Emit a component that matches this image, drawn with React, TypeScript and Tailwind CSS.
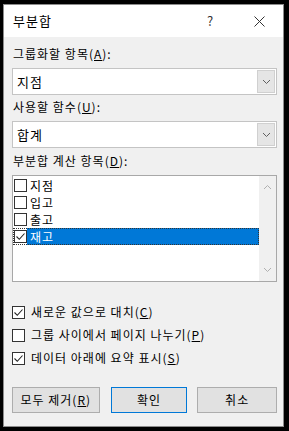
import React from "react";

const font = { fontFamily: '"Noto Sans CJK KR", "Noto Sans", sans-serif' };

function Chevron({ up = false, color = "#606060" }: { up?: boolean; color?: string }) {
  return (
    <svg width="9" height="6" viewBox="0 0 9 6">
      <path d={up ? "M1 5 L4.5 1.5 L8 5" : "M1 1 L4.5 4.5 L8 1"} fill="none" stroke={color} strokeWidth="1" />
    </svg>
  );
}

function Box({ checked }: { checked: boolean }) {
  return (
    <div className="w-[13px] h-[13px] border border-[#333333] bg-white flex items-center justify-center shrink-0">
      {checked && (
        <svg width="11" height="11" viewBox="0 0 11 11">
          <path d="M1.5 5.5 L4.3 8.3 L9.5 2.5" fill="none" stroke="#222" strokeWidth="1.1" />
        </svg>
      )}
    </div>
  );
}

function Combo({ value }: { value: string }) {
  return (
    <div className="h-[27px] border border-[#c4c4c4] bg-white flex items-stretch">
      <div className="flex-1 flex items-center pl-[4px] text-[13px] tracking-[1px] text-black">{value}</div>
      <div className="w-[18px] my-[1px] mr-[1px] bg-[#e5e5e5] border border-[#d0d0d0] flex items-center justify-center">
        <Chevron />
      </div>
    </div>
  );
}

function Label({ text, key1 }: { text: string; key1: string }) {
  return (
    <div className="h-[16px] flex items-center text-[12px] tracking-[1px] text-black leading-none pl-[1px]">
      {text}(<span className="underline">{key1}</span>):
    </div>
  );
}

function Item({ text, checked = false, selected = false }: { text: string; checked?: boolean; selected?: boolean }) {
  return (
    <div
      className={
        "h-[17px] flex items-center pl-[1px] " +
        (selected ? "outline outline-1 outline-dotted outline-[#333] -outline-offset-1" : "")
      }
    >
      <Box checked={checked} />
      <div
        className={
          "h-full flex-1 flex items-center pl-[3px] text-[12px] tracking-[1px] " +
          (selected ? "bg-[#0078d7] text-white" : "text-black")
        }
      >
        {text}
      </div>
    </div>
  );
}

function Option({ text, k, checked }: { text: string; k: string; checked: boolean }) {
  return (
    <div className="h-[16px] flex items-center gap-[6px] text-[12px] tracking-[1px] text-black">
      <Box checked={checked} />
      <span>
        {text}(<span className="underline">{k}</span>)
      </span>
    </div>
  );
}

export default function App() {
  return (
    <div className="w-[289px] h-[431px] bg-black pl-[3px] pr-[5px] pt-[4px] pb-[4px]" style={font}>
      <div className="w-full h-full border border-[#8c8c8c] bg-[#f0f0f0] flex flex-col">
        <div className="h-[32px] bg-white flex items-center pl-[9px] shrink-0">
          <div className="flex-1 text-[13px] tracking-[1px] text-black">부분합</div>
          <div className="w-[24px] mr-[13px] text-[13px] text-[#333] text-center">?</div>
          <div className="w-[48px] flex items-center justify-center">
            <svg width="11" height="11" viewBox="0 0 11 11">
              <path d="M0.5 0.5 L10.5 10.5 M10.5 0.5 L0.5 10.5" stroke="#333" strokeWidth="1" />
            </svg>
          </div>
        </div>
        <div className="flex flex-col pl-[8px] pr-[6px] pt-[9px]">
          <Label text="그룹화할 항목" key1="A" />
          <div className="mt-[6px]">
            <Combo value="지점" />
          </div>
          <div className="mt-[4px]">
            <Label text="사용할 함수" key1="U" />
          </div>
          <div className="mt-[6px]">
            <Combo value="합계" />
          </div>
          <div className="mt-[5px]">
            <Label text="부분합 계산 항목" key1="D" />
          </div>
          <div className="mt-[6px] h-[107px] border border-[#a8a8a8] bg-white flex">
            <div className="flex-1 flex flex-col pt-[1px]">
              <Item text="지점" />
              <Item text="입고" />
              <Item text="출고" />
              <Item text="재고" checked selected />
            </div>
            <div className="w-[17px] bg-[#f0f0f0] flex flex-col justify-between items-center py-[8px]">
              <Chevron up color="#b0b0b0" />
              <Chevron color="#b0b0b0" />
            </div>
          </div>
          <div className="mt-[22px] flex flex-col gap-[7px]">
            <Option text="새로운 값으로 대치" k="C" checked />
            <Option text="그룹 사이에서 페이지 나누기" k="P" checked={false} />
            <Option text="데이터 아래에 요약 표시" k="S" checked />
          </div>
          <div className="mt-[21px] flex">
            <div className="w-[88px] h-[26px] bg-[#e1e1e1] border border-[#adadad] flex items-center justify-center text-[12px] tracking-[1px] text-black">
              모두 제거(<span className="underline">R</span>)
            </div>
            <div className="ml-[11px] w-[77px] h-[26px] bg-[#e1e1e1] border border-[#0078d7] flex items-center justify-center text-[12px] tracking-[1px] text-black">
              확인
            </div>
            <div className="ml-[10px] w-[80px] h-[26px] bg-[#e1e1e1] border border-[#adadad] flex items-center justify-center text-[12px] tracking-[1px] text-black">
              취소
            </div>
          </div>
        </div>
      </div>
    </div>
  );
}
